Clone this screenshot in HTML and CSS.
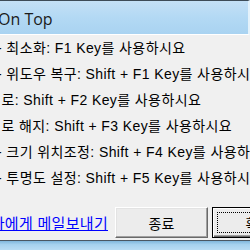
FILE: index.html
```html
<!DOCTYPE html>
<html lang="ko">
<head>
    <meta charset="UTF-8">
    <title>On Top</title>
    <link rel="stylesheet" href="styles.css">
</head>
<body>
    <div class="window">
        <div class="titlebar">
            <span class="title">On Top</span>
        </div>
        <div class="dialog">
            <div class="help">
                <div class="row">- 최소화: F1 Key를 사용하시요</div>
                <div class="row">- 위도우 복구: Shift + F1 Key를 사용하시요</div>
                <div class="row wide">- 항상 위로: Shift + F2 Key를 사용하시요</div>
                <div class="row wide">- 항상 위로 해지: Shift + F3 Key를 사용하시요</div>
                <div class="row">- 크기 위치조정: Shift + F4 Key를 사용하시요</div>
                <div class="row">- 투명도 설정: Shift + F5 Key를 사용하시요</div>
            </div>
            <div class="footer">
                <a href="#" class="mail">개발자에게 메일보내기</a>
                <button class="btn">종료</button>
                <button class="btn default"><span class="focus">확인</span></button>
            </div>
        </div>
        <div class="frame-bottom"></div>
    </div>
</body>
</html>
```

FILE: styles.css
```css
body {
    margin: 0;
    background: #f0f0f0;
}
.window {
    width: 250px;
    height: 250px;
    overflow: hidden;
    display: flex;
    flex-direction: column;
}
.titlebar {
    height: 33px;
    flex-shrink: 0;
    background: linear-gradient(180deg, #c4e0f6 0%, #b3d9f4 50%, #a9d3f1 100%);
    border-top: 1px solid #3d4b57;
    border-bottom: 1px solid #ffffff;
    border-right: 2px solid #e4f2fb;
    display: flex;
    align-items: center;
}
.title {
    margin-left: -2px;
    margin-top: 2px;
    font-family: "Open Sans", "Noto Sans", sans-serif;
    font-size: 16px;
    color: #1b1b1b;
}
.dialog {
    flex: 1;
    background: #f0f0f0;
    display: flex;
    flex-direction: column;
}
.help {
    margin-left: -3px;
    font-family: "Liberation Sans", "Noto Sans CJK KR", sans-serif;
    font-size: 14px;
    letter-spacing: 0.4px;
    color: #000;
}
.row {
    height: 26px;
    line-height: 26px;
    white-space: nowrap;
}
.row.wide {
    margin-left: -49px;
}
.footer {
    display: flex;
    align-items: center;
    margin-top: 16px;
    margin-left: -70px;
}
.mail {
    flex-shrink: 0;
    width: 178px;
    text-align: right;
    font-family: "Noto Sans CJK KR", sans-serif;
    font-size: 15px;
    letter-spacing: 0.3px;
    color: #0000ff;
    white-space: nowrap;
    margin-right: 7px;
}
.btn {
    flex-shrink: 0;
    width: 93px;
    height: 31px;
    margin-right: 4px;
    padding: 0;
    background: #ececec;
    border: 1px solid;
    border-color: #ffffff #696969 #696969 #ffffff;
    box-shadow: inset -1px -1px 0 #a0a0a0, inset 1px 1px 0 #e3e3e3;
    font-family: "Noto Sans CJK KR", sans-serif;
    font-size: 14px;
    color: #000;
}
.btn.default {
    border: 1px solid #000;
    box-shadow: inset 1px 1px 0 #fff, inset -1px -1px 0 #696969, inset -2px -2px 0 #a0a0a0;
    padding: 4px;
}
.focus {
    display: flex;
    align-items: center;
    justify-content: center;
    height: 100%;
    border: 1px dotted #000;
    box-sizing: border-box;
}
.frame-bottom {
    height: 9px;
    flex-shrink: 0;
    border-top: 1px solid #4a5763;
    background: linear-gradient(180deg, #7fb6dc 0%, #a6d1ee 40%, #b8dcf4 100%);
}
```
